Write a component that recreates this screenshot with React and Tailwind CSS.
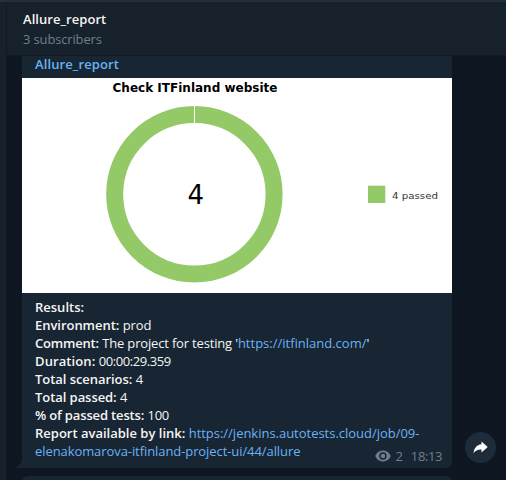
const results = [
  { label: 'Environment:', value: 'prod', labelClass: 'tracking-[-0.04px]', valueClass: 'tracking-[-0.1px]' },
  {
    label: 'Comment:',
    labelClass: 'tracking-[-0.2px]',
    valueClass: 'tracking-[-0.17px]',
    value: (
      <>
        The project for testing '<Link className="tracking-normal">https://itfinland.com/</Link>'
      </>
    ),
  },
  { label: 'Duration:', value: '00:00:29.359', labelClass: 'tracking-[0.1px]', valueClass: 'tracking-[-0.42px]' },
  { label: 'Total scenarios:', value: '4', labelClass: 'tracking-[-0.05px]', valueClass: '' },
  { label: 'Total passed:', value: '4', labelClass: 'tracking-[-0.06px]', valueClass: '' },
  { label: '% of passed tests:', value: '100', labelClass: 'tracking-[-0.15px]', valueClass: 'tracking-[-0.3px]' },
];

function Link({ children, className = '' }) {
  return <a className={`text-[#6ab3f3] ${className}`}>{children}</a>;
}

function Header() {
  return (
    <header className="h-[54px] shrink-0 border-b border-[#101820] bg-[#17212b] pl-4 pt-[8px]">
      <h1 className="h-[20px] text-[13px] font-semibold leading-[18px] tracking-[0.05px] text-[#f5f5f5]">Allure_report</h1>
      <p className="text-[13px] leading-[19px] tracking-[-0.15px] text-[#6d7f8f]">3 subscribers</p>
    </header>
  );
}

function Chart() {
  return (
    <svg className="block h-[215px] w-[430px] bg-white" viewBox="0 0 430 215">
      <text
        x="90.5"
        y="13.500"
        textLength="165"
        lengthAdjust="spacingAndGlyphs"
        className="fill-black font-['DejaVu_Sans',sans-serif] text-[11.5px] font-bold"
      >
        Check ITFinland website
      </text>
      <circle cx="172.4" cy="116.3" r="79.7" fill="none" stroke="#93c967" strokeWidth="17" />
      <path d="M172.5 27v18" stroke="#fff" strokeWidth="1" />
      <text x="173.7" y="126" textAnchor="middle" className="fill-black font-['DejaVu_Sans',sans-serif] text-[26px]">
        4
      </text>
      <rect x="346" y="107.700" width="17.3" height="17.3" fill="#93c967" />
      <text
        x="370"
        y="121"
        textLength="46"
        lengthAdjust="spacingAndGlyphs"
        className="fill-[#333] font-['DejaVu_Sans',sans-serif] text-[9.5px]"
      >
        4 passed
      </text>
    </svg>
  );
}

function Eye() {
  return (
    <svg className="h-[12px] w-[16px]" viewBox="0 0 16 12">
      <path
        fillRule="evenodd"
        fill="#6d7f8f"
        d="M8 .5C4.4.5 1.5 2.8.3 6c1.2 3.200 4.100 5.500 7.700 5.500s6.500-2.300 7.700-5.500C14.500 2.800 11.600.5 8 .5Zm0 9.200a3.700 3.700 0 1 1 0-7.400 3.700 3.700 0 0 1 0 7.400Zm0-1.500a2.200 2.200 0 1 0 0-4.400 2.200 2.200 0 0 0 0 4.400Z"
      />
    </svg>
  );
}

function Message() {
  return (
    <article className="relative h-[412px] w-[430px] shrink-0 rounded-br-[6px] bg-[#182533]">
      <svg className="absolute -left-[6px] bottom-0 h-[10px] w-[6px]" viewBox="0 0 6 10">
        <path d="M6 0C6 4 4 7.500 0 9.200V10h6Z" fill="#182533" />
      </svg>
      <h2 className="h-[22px] pl-[13px] text-[13px] font-semibold leading-[17px] tracking-[0.1px] text-[#6ab3f3]">
        Allure_report
      </h2>
      <Chart />
      <div className="pl-[13px] pt-[5px] text-[13px] leading-[18px] text-[#f5f5f5]">
        <p className="font-semibold">Results:</p>
        {results.map((r) => (
          <p key={r.label}>
            <b className={`font-semibold ${r.labelClass}`}>{r.label}</b> <span className={r.valueClass}>{r.value}</span>
          </p>
        ))}
        <p>
          <b className="font-semibold">Report available by link:</b>{' '}
          <Link className="tracking-[-0.02px]">https://jenkins.autotests.cloud/job/09-</Link>
        </p>
        <div className="flex items-start justify-between pr-[10px]">
          <Link className="tracking-[-0.08px]">elenakomarova-itfinland-project-ui/44/allure</Link>
          <span className="flex items-center pt-[5px] text-[#6d7f8f]">
            <Eye />
            <span className="ml-[4px]">2</span>
            <span className="ml-[8px] tracking-[-0.4px]">18:13</span>
          </span>
        </div>
      </div>
    </article>
  );
}

function ShareButton() {
  return (
    <button className="flex size-[31px] items-center justify-center rounded-full bg-[#1e2c3a]">
      <svg className="h-[13px] w-[15px]" viewBox="0 0 15 13">
        <path d="M8.500.5 14.700 6l-6.200 5.500V8.500C5 8.300 2.500 9.300.5 12.300 1 7.500 3.500 3.800 8.500 3.300Z" fill="#fff" />
      </svg>
    </button>
  );
}

export default function App() {
  return (
    <div className="flex h-[480px] w-[506px] flex-col overflow-hidden bg-[#0e1621] font-['Open_Sans','Noto_Sans',sans-serif]">
      <div className="h-[2px] shrink-0 bg-[#242f3d]" />
      <div className="flex min-h-0 flex-1">
        <aside className="w-[7px] shrink-0 border-r border-[#101921] bg-[#17212b]" />
        <main className="flex min-w-0 flex-1 flex-col">
          <Header />
          <div className="flex items-start pl-[15px]">
            <Message />
            <div className="pl-[13px] pt-[376px]">
              <ShareButton />
            </div>
          </div>
          <div className="ml-[15px] mt-[8px] h-[20px] w-[430px] shrink-0 rounded-t-[6px] bg-[#182533]" />
        </main>
      </div>
    </div>
  );
}
